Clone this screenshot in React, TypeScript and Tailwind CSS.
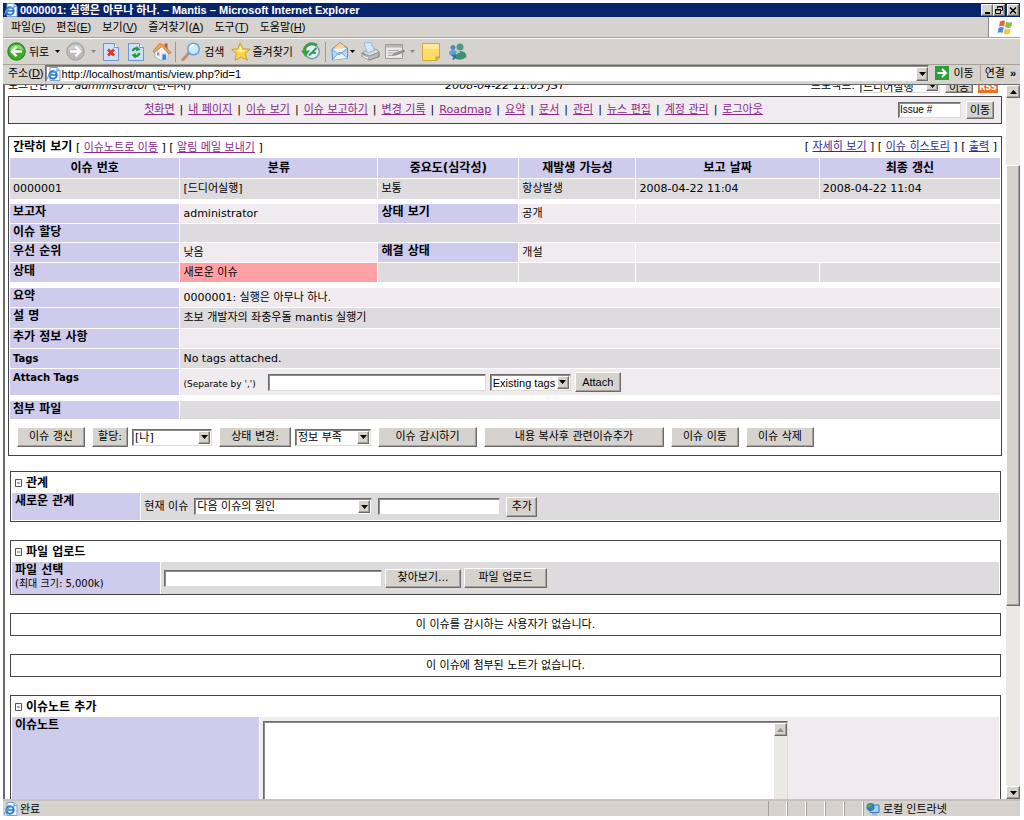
import React from "react";

const links = ["첫화면", "내 페이지", "이슈 보기", "이슈 보고하기", "변경 기록", "Roadmap", "요약", "문서", "관리", "뉴스 편집", "계정 관리", "로그아웃"];

const menus = [
  ["파일", "F"],
  ["편집", "E"],
  ["보기", "V"],
  ["즐겨찾기", "A"],
  ["도구", "T"],
  ["도움말", "H"],
];

const raised =
  "border border-t-white border-l-white border-r-[#6b6b6b] border-b-[#6b6b6b] bg-[#d6d3ce] shadow-[inset_-1px_-1px_0_#a5a29c]";
const sunken =
  "border border-t-[#6b6b6b] border-l-[#6b6b6b] border-r-[#dedbd6] border-b-[#dedbd6] bg-white shadow-[inset_1px_1px_0_#8c8c8c]";
const label = "bg-[#cfcbed] px-[3px] text-left align-top text-[12px] leading-4 font-bold";
const light = "bg-[#efebee] px-[3px]";
const dark = "bg-[#dddbde] px-[3px]";
const visited = "text-[#8a2a8a] underline";
const fresh = "text-[#2c2ca0] underline";

const Btn = ({ children, className = "" }: { children: React.ReactNode; className?: string }) => (
  <button type="button" className={`shrink-0 whitespace-nowrap text-center leading-4 text-black ${raised} ${className}`}>
    {children}
  </button>
);

const Arrow = ({ up = false, color = "#000" }: { up?: boolean; color?: string }) => (
  <svg width="7" height="4" viewBox="0 0 7 4" className="shrink-0">
    <path d={up ? "M0 4h7L3.500 0z" : "M0 0h7L3.500 4z"} fill={color} />
  </svg>
);

const SmallArrow = ({ color = "#000" }: { color?: string }) => (
  <svg width="5" height="3" viewBox="0 0 5 3" className="shrink-0">
    <path d="M0 0h5L2.500 3z" fill={color} />
  </svg>
);

const SelectBox = ({ name, value, className = "" }: { name: string; value: string; className?: string }) => (
  <span className={`relative block shrink-0 ${className}`}>
    <select aria-label={name} className={`block h-full w-full appearance-none pr-3 pl-[2px] leading-4 ${sunken}`}>
      <option>{value}</option>
    </select>
    <span className={`pointer-events-none absolute top-[2px] right-[2px] bottom-[2px] flex w-3 items-center justify-center ${raised}`}>
      <Arrow />
    </span>
  </span>
);

const IeIcon = () => (
  <svg width="14" height="14" viewBox="0 0 14 14" className="shrink-0">
    <path d="M3 .5h7l3 3v10H3z" fill="#f4f9ff" stroke="#7c9fd0" />
    <path d="M10 .5v3h3" fill="#c6dcf5" stroke="#7c9fd0" />
    <circle cx="6" cy="8" r="3.700" fill="none" stroke="#2878cc" strokeWidth="2" />
    <path d="M3 8h6.500" stroke="#2878cc" strokeWidth="1.600" />
    <path d="M.7 12.300C0 9 6 3.500 11 4.200" fill="none" stroke="#5aa7e6" strokeWidth="1.200" />
  </svg>
);

const RoundArrow = ({ back = false }: { back?: boolean }) => (
  <svg width="19" height="19" viewBox="0 0 19 19" className="shrink-0">
    <circle cx="9.500" cy="9.500" r="8.700" fill={back ? "#3eaa2e" : "#b9b9b9"} stroke={back ? "#237d1c" : "#a0a0a0"} />
    <path d="M2.500 8a7.200 6.500 0 0 1 14 0q-7-3-14 0" fill={back ? "#8fd877" : "#d4d4d4"} />
    <path
      d={back ? "M15 9.500H5M9.500 4.800 4.800 9.500l4.700 4.700" : "M4 9.500h10M9.500 4.800l4.700 4.700-4.700 4.700"}
      fill="none"
      stroke="#fff"
      strokeWidth="2.400"
    />
  </svg>
);

const StopIcon = () => (
  <svg width="16" height="18" viewBox="0 0 16 18" className="shrink-0">
    <path d="M.5.5h11l4 4v13H.5z" fill="#cfe1fb" stroke="#6f95cf" />
    <path d="M11.500.5v4h4" fill="#fff" stroke="#6f95cf" />
    <path d="m5 6.500 6 6m0-6-6 6" stroke="#e0361e" strokeWidth="2.600" />
  </svg>
);

const RefreshIcon = () => (
  <svg width="16" height="18" viewBox="0 0 16 18" className="shrink-0">
    <path d="M.5.5h11l4 4v13H.5z" fill="#cfe1fb" stroke="#6f95cf" />
    <path d="M11.500.5v4h4" fill="#fff" stroke="#6f95cf" />
    <path d="M4.500 8Q6 4.500 9.500 5.500M11.500 10Q10 14 6.500 12.800" fill="none" stroke="#239a32" strokeWidth="2.200" />
    <path d="M8.500 3l4 3.500-4.500 2zM7.500 15.500l-4-3.500L8 10z" fill="#239a32" />
  </svg>
);

const HomeIcon = () => (
  <svg width="20" height="19" viewBox="0 0 20 19" className="shrink-0">
    <path d="M12.500 1.500h3v6h-3z" fill="#c0562c" />
    <path d="M3 9l7-6 6.500 7v6L9 18.500 3 15z" fill="#f3f7fd" stroke="#8ea8cf" strokeWidth=".8" />
    <path d="M9 11l7.500-1v6L9 18.500z" fill="#cfdff4" />
    <path d="M1 9.500 7.500 1.500l3.500 1 8 8-2 1.500-7-7.500-7.500 6z" fill="#f0a350" stroke="#c87428" strokeWidth=".8" />
    <path d="M10.500 12.500h3.500v4.700l-3.500 1z" fill="#4a7fc5" />
    <path d="M5 10.500h2.500v3H5z" fill="#6d9ed8" />
  </svg>
);

const SearchIcon = () => (
  <svg width="20" height="19" viewBox="0 0 20 19" className="shrink-0">
    <path d="M2 17.500 8 11" stroke="#c98d6c" strokeWidth="3.200" strokeLinecap="round" />
    <circle cx="12.500" cy="7" r="5.800" fill="#cdeafc" stroke="#6ba1d8" strokeWidth="1.500" />
    <path d="M9 6q1-3 4-3" fill="none" stroke="#fff" strokeWidth="1.800" />
  </svg>
);

const StarIcon = () => (
  <svg width="20" height="19" viewBox="0 0 20 19" className="shrink-0">
    <path d="M9 .8l3 6 7 .4-5.200 4.500 2.700 6.500-6.500-3.200-5.800 3.400 1.300-6.800L.8 7.500l6.400-.8z" fill="#fbd84a" stroke="#d39a1d" />
    <path d="M9 3.500l2 4.500 4.500.6L10 10.500 5 8.500l3-.7z" fill="#fff2a0" />
  </svg>
);

const HistoryIcon = () => (
  <svg width="19" height="19" viewBox="0 0 19 19" className="shrink-0">
    <circle cx="11" cy="9.500" r="7.200" fill="#dceef7" stroke="#8696a2" strokeWidth="1.400" />
    <path d="M3.500 10C3 3 10-.5 16 3.500" fill="none" stroke="#3d9d4a" strokeWidth="3" />
    <path d="M0 8.500h9L4.500 15z" fill="#3d9d4a" />
    <path d="M8 13.500 15.500 6M11 10.500l4 .5" stroke="#3d8d5a" strokeWidth="1.800" />
  </svg>
);

const MailIcon = () => (
  <svg width="18" height="19" viewBox="0 0 18 19" className="shrink-0">
    <path d="M1 7l8-6.500L16.500 6v10l-15 2z" fill="#b8daf7" stroke="#5d93cc" />
    <path d="M4 5l5-4 5 3.500v5l-5.500 2L4 9z" fill="#fbd59b" stroke="#dba566" strokeWidth=".7" />
    <path d="M1.500 18l6-7.500h2.500l6.500 5.500M1 7l7 6 8.500-7" fill="#e5f3ff" stroke="#5d93cc" strokeWidth=".8" />
  </svg>
);

const PrintIcon = () => (
  <svg width="19" height="19" viewBox="0 0 19 19" className="shrink-0">
    <path d="M1 11l5-2.500L15 7l3 3v4.500L8.500 18 1 14.500z" fill="#dcdcdc" stroke="#858585" strokeWidth=".8" />
    <path d="M3 1l7-.5 3.500 8L6.500 11z" fill="#d5e8fb" stroke="#89acd6" strokeWidth=".8" />
    <path d="M1 11l7.500 3L18 10v4.500L8.500 18z" fill="#b9b9b9" stroke="#777" strokeWidth=".7" />
    <path d="M3 14.500l4 1.700" stroke="#fff" strokeWidth="1.200" />
  </svg>
);

const EditIcon = () => (
  <svg width="20" height="17" viewBox="0 0 20 17" className="shrink-0">
    <path d="M.5 1.500h17v14H.5z" fill="#e8e8e8" stroke="#999" />
    <path d="M1 2h16v2.500H1z" fill="#b6b6b6" />
    <path d="M3 7.500h11M3 10h7M3 12.500h4" stroke="#aaa" />
    <path d="M7 12.500l3-2.500 9-3 .5 1.800-8.500 3.200z" fill="#999" stroke="#777" strokeWidth=".6" />
  </svg>
);

const NoteIcon = () => (
  <svg width="18" height="18" viewBox="0 0 18 18" className="shrink-0">
    <path d="M.5.5h17V14L14 17.500H.5z" fill="#fbdc67" stroke="#d5a632" />
    <path d="M1 1h16v5H1z" fill="#fdeb98" />
    <path d="M17.500 14H14v3.500z" fill="#f1bb3c" stroke="#b98a20" strokeWidth=".7" />
  </svg>
);

const MessengerIcon = () => (
  <svg width="19" height="18" viewBox="0 0 19 18" className="shrink-0">
    <circle cx="5" cy="4.500" r="2.500" fill="#4d8bc0" />
    <path d="M1 11q0-4 4-4t5 4l-3 3.500q-4-1-6-3.500" fill="#61a2d0" />
    <circle cx="12" cy="4" r="3.500" fill="#4c9a83" />
    <path d="M5.500 15q0-7 6.500-7t6.500 6q-5.500 5-13 1" fill="#3f9077" />
    <path d="M8 11q2-2.500 4-2" fill="none" stroke="#a5dbbd" strokeWidth="1.600" />
    <path d="M4 12l3 1.500-2 3" fill="none" stroke="#2871a8" strokeWidth="1.800" />
  </svg>
);

const WindowsFlag = () => (
  <svg width="16" height="15" viewBox="0 0 16 15">
    <path d="M3 1.500q3-2 5-.3L7 6.500q-2-1.500-5 0z" fill="#e8623a" />
    <path d="M9 1.700q3 1.300 6.300.3L14 7.500q-3 1.200-6-.5z" fill="#8bbf48" />
    <path d="M1.700 7.800q3-1.500 5-.2l-1.200 5.500q-2-1.500-5-.2z" fill="#4a8adb" />
    <path d="M7.700 8.300q3 1.500 6 .5L12.500 14q-3 1-6-.5z" fill="#f6c63c" />
  </svg>
);

const IntranetIcon = () => (
  <svg width="14" height="14" viewBox="0 0 14 14" className="shrink-0">
    <path d="M4 3h9v7.500H4z" fill="#9fd4f8" stroke="#3f74b5" />
    <path d="M6 11h5v1.500l1.500 1h-7z" fill="#a8b4c0" />
    <circle cx="4.500" cy="5" r="4" fill="#2f78cf" />
    <path d="M2 2.500q3-1.500 4 1L4 6 1.500 5zM5 7l2-1v2z" fill="#4cb04a" />
  </svg>
);

const Fold = ({ children }: { children: React.ReactNode }) => (
  <h2 className="flex h-[21px] items-center gap-1 pl-[3px] text-[12px] font-bold">
    <svg width="7" height="8" viewBox="0 0 7 8">
      <path d="M.5.5h6v7h-6zM2 4h3" fill="none" stroke="#555" />
    </svg>
    {children}
  </h2>
);

const Separator = () => <span className="h-5 w-px bg-[#9a9791]" />;

export default function App() {
  return (
    <div className="h-screen overflow-hidden bg-white pt-[3px] pr-1 pb-1 pl-[3px] font-['Liberation_Sans','Noto_Sans_CJK_KR',sans-serif] text-[11px] leading-4 text-black">
      <div className="flex h-full flex-col bg-[#d6d3ce]">
        <header className="flex h-[14px] shrink-0 items-center bg-[#08246b] pl-px text-white">
          <IeIcon />
          <h1 className="ml-[2px] leading-[14px] font-bold whitespace-nowrap">
            0000001: 실행은 아무나 하나. – Mantis – Microsoft Internet Explorer
          </h1>
          <div className="ml-auto flex h-3 pr-px">
            <button type="button" aria-label="최소화" className={`flex w-3 items-end justify-center pb-px ${raised}`}>
              <span className="h-[2px] w-[5px] bg-black" />
            </button>
            <button type="button" aria-label="이전 크기로" className={`flex w-3 items-center justify-center ${raised}`}>
              <svg width="8" height="8" viewBox="0 0 8 8">
                <path d="M2.500 2.500v-2h5v4h-2M.5 3.500h5v4h-5zM2.500 1h5M.5 4h5" fill="none" stroke="#000" />
              </svg>
            </button>
            <button type="button" aria-label="닫기" className={`ml-[2px] flex w-3 items-center justify-center ${raised}`}>
              <svg width="8" height="7" viewBox="0 0 8 7">
                <path d="M1 .5l6 6m0-6-6 6" stroke="#000" strokeWidth="1.500" />
              </svg>
            </button>
          </div>
        </header>

        <nav className="flex h-[21px] shrink-0 items-stretch border-b border-[#a5a29c]">
          <div className="flex flex-1 items-center gap-[11px] pl-2">
            {menus.map(([name, key]) => (
              <button type="button" key={key}>
                {name}(<u>{key}</u>)
              </button>
            ))}
          </div>
          <div className="flex w-8 items-center justify-center border-l border-[#8c8c8c] bg-white">
            <WindowsFlag />
          </div>
        </nav>

        <div className="flex h-[26px] shrink-0 items-center border-t border-white pl-1 whitespace-nowrap">
          <button type="button" className="flex items-center gap-[3px]">
            <RoundArrow back />
            뒤로
            <span className="ml-[3px]"><SmallArrow /></span>
          </button>
          <button type="button" aria-label="앞으로" className="ml-[6px] flex items-center gap-[6px]">
            <RoundArrow />
            <SmallArrow color="#888" />
          </button>
          <button type="button" aria-label="중지" className="ml-[7px]"><StopIcon /></button>
          <button type="button" aria-label="새로 고침" className="ml-[9px]"><RefreshIcon /></button>
          <button type="button" aria-label="홈" className="mr-[3px] ml-2"><HomeIcon /></button>
          <Separator />
          <button type="button" className="ml-[5px] flex items-center gap-[3px]"><SearchIcon />검색</button>
          <button type="button" className="ml-[6px] flex items-center gap-[2px]"><StarIcon />즐겨찾기</button>
          <button type="button" aria-label="열어본 페이지" className="mr-[5px] ml-2"><HistoryIcon /></button>
          <Separator />
          <button type="button" aria-label="메일" className="ml-[5px] flex items-center gap-px">
            <MailIcon />
            <SmallArrow />
          </button>
          <button type="button" aria-label="인쇄" className="ml-[6px]"><PrintIcon /></button>
          <button type="button" aria-label="편집" className="ml-[5px] flex items-center gap-[5px]">
            <EditIcon />
            <SmallArrow color="#888" />
          </button>
          <button type="button" aria-label="메모" className="ml-[7px]"><NoteIcon /></button>
          <button type="button" aria-label="메신저" className="ml-2"><MessengerIcon /></button>
        </div>

        <div className="flex h-5 shrink-0 items-start border-t border-[#a5a29c] pl-[5px]">
          <label htmlFor="address" className="whitespace-nowrap">주소(<u>D</u>)</label>
          <div className={`ml-px flex h-[17px] flex-1 items-center pl-px ${sunken}`}>
            <IeIcon />
            <input id="address" type="text" defaultValue="http://localhost/mantis/view.php?id=1" className="ml-px min-w-0 flex-1 outline-none" />
            <button type="button" aria-label="주소 목록" className={`flex h-[14px] w-3 items-center justify-center ${raised}`}><Arrow /></button>
          </div>
          <button type="button" className="ml-[6px] flex items-center gap-1 whitespace-nowrap">
            <svg width="14" height="14" viewBox="0 0 14 14">
              <path d="M0 0h14v14H0z" fill="#2f9e3a" />
              <path d="M2.500 7h8M7 3l4 4-4 4" fill="none" stroke="#fff" strokeWidth="2" />
            </svg>
            이동
          </button>
          <button type="button" className="ml-[6px] flex items-center gap-[5px] border-l border-[#a5a29c] pr-1 pl-1 whitespace-nowrap">
            연결
            <span className="font-bold">»</span>
          </button>
        </div>

        <div className="flex min-h-0 flex-1 overflow-hidden border-t border-l-2 border-[#6b6b6b] bg-white">
          <main className="min-w-0 flex-1 overflow-hidden pr-1 pl-[3px] font-['DejaVu_Sans','Noto_Sans_CJK_KR',sans-serif]">
            <div className="-mt-[7px] grid h-[18px] grid-cols-3 items-start">
              <p>로그인한 ID : <i>administrator</i> (관리자)</p>
              <p className="text-center italic">2008-04-22 11:05 JST</p>
              <div className="flex items-center justify-end gap-[5px] pr-1">
                <span>프로젝트:</span>
                <SelectBox name="프로젝트" value="드디어실행" className="h-[14px] w-20" />
                <Btn className="h-[14px] w-7 leading-3">이동</Btn>
                <a href="#rss" className="h-[14px] w-5 bg-[#ee6f26] text-center text-[8px] leading-[18px] font-bold text-white">RSS</a>
              </div>
            </div>

            <div className="flex h-7 items-center border border-[#444] bg-[#efebee]">
              <nav className="flex-1 text-center whitespace-nowrap">
                {links.map((l, i) => (
                  <React.Fragment key={l}>
                    {i > 0 && <span className="mx-[5px]">|</span>}
                    <a href="#menu" className={visited}>{l}</a>
                  </React.Fragment>
                ))}
              </nav>
              <form className="flex items-center gap-[5px] pr-[7px] font-['Liberation_Sans','Noto_Sans_CJK_KR',sans-serif]">
                <input aria-label="Issue #" defaultValue="Issue #" className={`h-4 w-[63px] px-px text-[10px] ${sunken}`} />
                <Btn className="h-[18px] w-7">이동</Btn>
              </form>
            </div>

            <section className="mt-3 border border-[#444] pb-2">
              <div className="flex h-5 items-center justify-between px-1">
                <p className="whitespace-pre">
                  <b className="text-[12px]">간략히 보기</b> [ <a href="#notes" className={visited}>이슈노트로 이동</a> ] [ <a href="#mail" className={visited}>알림 메일 보내기</a> ]
                </p>
                <p className="whitespace-pre">
                  [ <a href="#detail" className={fresh}>자세히 보기</a> ] [ <a href="#history" className={fresh}>이슈 히스토리</a> ] [ <a href="#print" className={fresh}>출력</a> ]
                </p>
              </div>
              <table className="w-full table-fixed border-separate border-spacing-px">
                <colgroup>
                  <col className="w-[17.2%]" />
                  <col className="w-[20%]" />
                  <col className="w-[14.2%]" />
                  <col className="w-[11.8%]" />
                  <col className="w-[18.5%]" />
                  <col />
                </colgroup>
                <tbody>
                  <tr className="h-5 bg-[#cfcbed] text-[12px]">
                    {["이슈 번호", "분류", "중요도(심각성)", "재발생 가능성", "보고 날짜", "최종 갱신"].map((h) => (
                      <th scope="col" key={h}>{h}</th>
                    ))}
                  </tr>
                  <tr className="h-5">
                    {["0000001", "[드디어실행]", "보통", "항상발생", "2008-04-22 11:04", "2008-04-22 11:04"].map((v, i) => (
                      <td key={i} className={dark}>{v}</td>
                    ))}
                  </tr>
                  <tr className="h-[3px]"><td colSpan={6} /></tr>
                  <tr className="h-[19px]">
                    <th scope="row" className={label}>보고자</th>
                    <td className={light}>administrator</td>
                    <th scope="row" className={label}>상태 보기</th>
                    <td className={light}>공개</td>
                    <td colSpan={2} className={light} />
                  </tr>
                  <tr className="h-[18px]">
                    <th scope="row" className={label}>이슈 할당</th>
                    <td colSpan={5} className={dark} />
                  </tr>
                  <tr className="h-[19px]">
                    <th scope="row" className={label}>우선 순위</th>
                    <td className={light}>낮음</td>
                    <th scope="row" className={label}>해결 상태</th>
                    <td className={light}>개설</td>
                    <td colSpan={2} className={light} />
                  </tr>
                  <tr className="h-[19px]">
                    <th scope="row" className={label}>상태</th>
                    <td className="bg-[#ffa0a4] px-[3px]">새로운 이슈</td>
                    <td className={dark} />
                    <td className={dark} />
                    <td className={dark} />
                    <td className={dark} />
                  </tr>
                  <tr className="h-1"><td colSpan={6} /></tr>
                  <tr className="h-[19px]">
                    <th scope="row" className={label}>요약</th>
                    <td colSpan={5} className={light}>0000001: 실행은 아무나 하나.</td>
                  </tr>
                  <tr className="h-5">
                    <th scope="row" className={label}>설 명</th>
                    <td colSpan={5} className={dark}>초보 개발자의 좌충우돌 mantis 실행기</td>
                  </tr>
                  <tr className="h-[19px]">
                    <th scope="row" className={label}>추가 정보 사항</th>
                    <td colSpan={5} className={light} />
                  </tr>
                  <tr className="h-[19px]">
                    <th scope="row" className="bg-[#cfcbed] px-[3px] text-left text-[10px] font-bold">Tags</th>
                    <td colSpan={5} className={dark}>No tags attached.</td>
                  </tr>
                  <tr className="h-[26px]">
                    <th scope="row" className="bg-[#cfcbed] px-[3px] pt-px text-left align-top text-[10px] font-bold">
                      <label htmlFor="tags">Attach Tags</label>
                    </th>
                    <td colSpan={5} className={light}>
                      <div className="flex items-center">
                        <span className="pt-1 text-[9px] leading-3">(Separate by ',')</span>
                        <div className="ml-3 flex items-center gap-1 font-['Liberation_Sans','Noto_Sans_CJK_KR',sans-serif]">
                          <input id="tags" type="text" className={`h-[17px] w-[218px] px-1 ${sunken}`} />
                          <SelectBox name="Existing tags" value="Existing tags" className="h-[17px] w-[81px]" />
                          <Btn className="h-5 w-[46px]">Attach</Btn>
                        </div>
                      </div>
                    </td>
                  </tr>
                  <tr className="h-1"><td colSpan={6} /></tr>
                  <tr className="h-[18px]">
                    <th scope="row" className={label}>첨부 파일</th>
                    <td colSpan={5} className={dark} />
                  </tr>
                </tbody>
              </table>
              <div className="mt-[7px] flex items-center gap-[7px] pl-2">
                <Btn className="h-5 w-[68px]">이슈 갱신</Btn>
                <div className="flex items-center gap-1">
                  <Btn className="h-5 w-9">할당:</Btn>
                  <SelectBox name="할당" value="[나]" className="h-[17px] w-20" />
                </div>
                <div className="flex items-center gap-1">
                  <Btn className="h-5 w-[72px]">상태 변경:</Btn>
                  <SelectBox name="상태 변경" value="정보 부족" className="h-[17px] w-[76px]" />
                </div>
                <Btn className="h-5 w-[99px]">이슈 감시하기</Btn>
                <Btn className="h-5 w-[180px]">내용 복사후 관련이슈추가</Btn>
                <Btn className="h-5 w-[68px]">이슈 이동</Btn>
                <Btn className="h-5 w-[68px]">이슈 삭제</Btn>
              </div>
            </section>

            <div className="mt-[15px] flex flex-col gap-[18px] pr-px pl-[2px]">
              <section className="border border-[#444] px-px pb-px">
                <Fold>관계</Fold>
                <div className="flex h-[27px] gap-px">
                  <div className={`w-[13%] ${label}`}>새로운 관계</div>
                  <div className={`flex flex-1 items-center gap-[6px] ${dark}`}>
                    <span className="whitespace-nowrap">현재 이슈</span>
                    <SelectBox name="현재 이슈" value="다음 이슈의 원인" className="h-[17px] w-[178px]" />
                    <input type="text" aria-label="이슈 번호" className={`h-[17px] w-[122px] px-1 ${sunken}`} />
                    <Btn className="h-5 w-[31px]">추가</Btn>
                  </div>
                </div>
              </section>

              <section className="border border-[#444] px-px">
                <Fold>파일 업로드</Fold>
                <div className="flex h-8 gap-px">
                  <label htmlFor="file" className={`w-[15%] ${label}`}>
                    파일 선택
                    <span className="block text-[10px] leading-3 font-normal">(최대 크기: 5,000k)</span>
                  </label>
                  <div className={`flex flex-1 items-center gap-[3px] ${dark}`}>
                    <input id="file" type="text" className={`h-[17px] w-[218px] px-1 ${sunken}`} />
                    <Btn className="h-[19px] w-[76px]">찾아보기...</Btn>
                    <Btn className="h-5 w-[83px]">파일 업로드</Btn>
                  </div>
                </div>
              </section>

              <p className="flex h-[23px] items-center justify-center border border-[#444]">이 이슈를 감시하는 사용자가 없습니다.</p>
              <p className="flex h-[23px] items-center justify-center border border-[#444]">이 이슈에 첨부된 노트가 없습니다.</p>

              <section className="border border-[#444] px-px pb-px">
                <Fold>이슈노트 추가</Fold>
                <div className="flex h-40 gap-px">
                  <label htmlFor="note" className={`w-1/4 ${label}`}>이슈노트</label>
                  <div className={`flex-1 py-1 ${light}`}>
                    <div className={`flex h-full w-[525px] pt-px pl-px ${sunken}`}>
                      <textarea id="note" className="min-w-0 flex-1 resize-none outline-none" />
                      <div className="w-[13px] bg-[#eae9e6]">
                        <div className={`flex h-[13px] items-center justify-center ${raised}`}><Arrow up color="#8c8c8c" /></div>
                      </div>
                    </div>
                  </div>
                </div>
              </section>
            </div>
          </main>

          <div className="flex w-[14px] flex-col bg-[#eae9e6]">
            <button type="button" aria-label="위로" className={`flex h-[13px] shrink-0 items-center justify-center ${raised}`}><Arrow up /></button>
            <div className="flex-[67]" />
            <div className={`flex-[442] ${raised}`} />
            <div className="flex-[181]" />
            <button type="button" aria-label="아래로" className={`flex h-[13px] shrink-0 items-center justify-center ${raised}`}><Arrow /></button>
          </div>
        </div>

        <footer className="flex h-[17px] shrink-0 items-stretch border-t-2 border-[#c5c2bb] whitespace-nowrap">
          <div className="flex flex-1 items-center gap-[2px] pl-px">
            <IeIcon />
            완료
          </div>
          {[0, 1, 2, 3, 4].map((n) => (
            <span key={n} className="w-[19px] border-r border-l border-r-white border-l-[#a5a29c]" />
          ))}
          <div className="flex w-[157px] items-center gap-[3px] border-l border-[#a5a29c] pl-[2px]">
            <IntranetIcon />
            로컬 인트라넷
          </div>
        </footer>
      </div>
    </div>
  );
}
